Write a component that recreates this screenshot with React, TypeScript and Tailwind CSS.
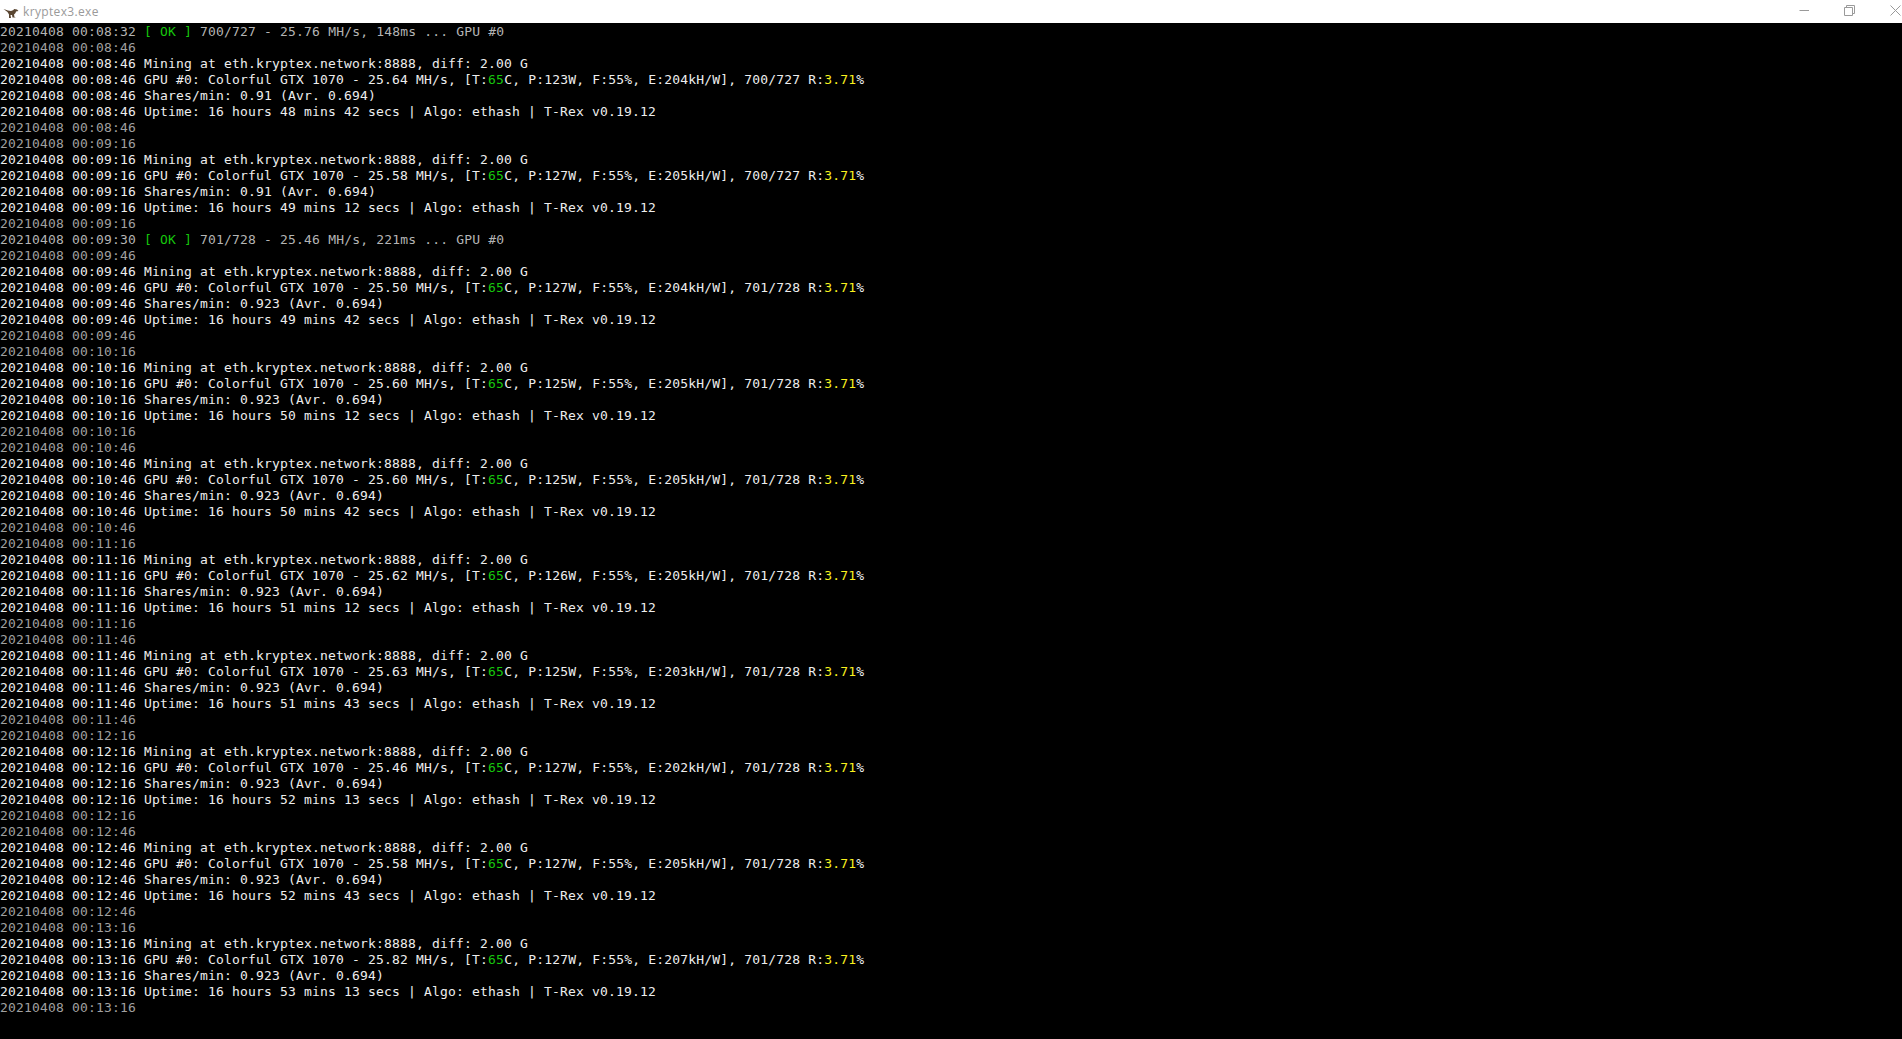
type Block = { time: string; rate: string; power: string; eff: string; shares: string; perMin: string; up: string };

const blocks: Block[] = [
  { time: "00:08:46", rate: "25.64", power: "123", eff: "204", shares: "700/727", perMin: "0.91", up: "48 mins 42" },
  { time: "00:09:16", rate: "25.58", power: "127", eff: "205", shares: "700/727", perMin: "0.91", up: "49 mins 12" },
  { time: "00:09:46", rate: "25.50", power: "127", eff: "204", shares: "701/728", perMin: "0.923", up: "49 mins 42" },
  { time: "00:10:16", rate: "25.60", power: "125", eff: "205", shares: "701/728", perMin: "0.923", up: "50 mins 12" },
  { time: "00:10:46", rate: "25.60", power: "125", eff: "205", shares: "701/728", perMin: "0.923", up: "50 mins 42" },
  { time: "00:11:16", rate: "25.62", power: "126", eff: "205", shares: "701/728", perMin: "0.923", up: "51 mins 12" },
  { time: "00:11:46", rate: "25.63", power: "125", eff: "203", shares: "701/728", perMin: "0.923", up: "51 mins 43" },
  { time: "00:12:16", rate: "25.46", power: "127", eff: "202", shares: "701/728", perMin: "0.923", up: "52 mins 13" },
  { time: "00:12:46", rate: "25.58", power: "127", eff: "205", shares: "701/728", perMin: "0.923", up: "52 mins 43" },
  { time: "00:13:16", rate: "25.82", power: "127", eff: "207", shares: "701/728", perMin: "0.923", up: "53 mins 13" },
];

function Stamp({ time }: { time: string }) {
  return <>20210408 {time} </>;
}

function Idle({ time }: { time: string }) {
  return (
    <div className="h-4 text-[#a0a0a0]">
      <Stamp time={time} />
    </div>
  );
}

function OkLine({ time, shares, rate, ms }: { time: string; shares: string; rate: string; ms: string }) {
  return (
    <div className="h-4 text-[#b4b4b4]">
      <Stamp time={time} />
      <span className="text-[#16c60c]">[ OK ]</span> {shares} - {rate} MH/s, {ms} ... GPU #0
    </div>
  );
}

function Stats({ b }: { b: Block }) {
  return (
    <div className="text-[#eeeeee]">
      <div className="h-4">
        <Stamp time={b.time} />
        Mining at eth.kryptex.network:8888, diff: 2.00 G
      </div>
      <div className="h-4">
        <Stamp time={b.time} />
        GPU #0: Colorful GTX 1070 - {b.rate} MH/s, [T:<span className="text-[#16c60c]">65</span>C, P:{b.power}W, F:55%, E:{b.eff}kH/W], {b.shares} R:
        <span className="text-[#f9f11e]">3.71</span>%
      </div>
      <div className="h-4">
        <Stamp time={b.time} />
        Shares/min: {b.perMin} (Avr. 0.694)
      </div>
      <div className="h-4">
        <Stamp time={b.time} />
        Uptime: 16 hours {b.up} secs | Algo: ethash | T-Rex v0.19.12
      </div>
    </div>
  );
}

export default function App() {
  return (
    <div className="flex h-[1039px] w-[1902px] flex-col overflow-hidden bg-black">
      {/* Title bar */}
      <div className="flex h-[23px] shrink-0 items-center bg-white pl-[3px] font-['Open_Sans','Noto_Sans',sans-serif] text-[12px] tracking-[0.35px] text-[#9a9a9a]">
        <svg width="16" height="16" viewBox="0 0 16 16" className="mr-[4px]">
          <path d="M0.5 5 L5 6.5 L8 7 L10.5 6 L11 5 L14 5.5 L15.5 7 L13 7.5 L12.5 9 L11 10.5 L11.5 13 L13 13.5 L9.5 13.5 L9 11 L7.5 11 L8 14 L6 14 L6 10.5 L4.5 8 Z" fill="#5a4632" />
        </svg>
        <span>kryptex3.exe</span>
        <div className="mb-[3px] ml-auto flex items-center">
          <svg width="11" height="11" viewBox="0 0 11 11" className="mr-[34px]">
            <path d="M0.5 5.5 H10" stroke="#9a9a9a" />
          </svg>
          <svg width="11" height="11" viewBox="0 0 11 11" className="mr-[35px]">
            <path d="M0.5 2.5 H8.5 V10.5 H0.5 Z M2.5 2.5 V0.5 H10.5 V8.5 H8.5" fill="none" stroke="#9a9a9a" />
          </svg>
          <svg width="11" height="11" viewBox="0 0 11 11" className="mr-px">
            <path d="M0.5 0.5 L10.5 10.5 M10.5 0.5 L0.5 10.5" stroke="#9a9a9a" />
          </svg>
        </div>
      </div>

      {/* Console */}
      <div className="flex-1 whitespace-pre pt-px font-['DejaVu_Sans_Mono',monospace] text-[13px] leading-4 tracking-[0.174px]">
        <OkLine time="00:08:32" shares="700/727" rate="25.76" ms="148ms" />
        <Idle time="00:08:46" />
        {blocks.map((b, i) => (
          <div key={b.time}>
            <Stats b={b} />
            <Idle time={b.time} />
            {i === 1 && <OkLine time="00:09:30" shares="701/728" rate="25.46" ms="221ms" />}
            {i < blocks.length - 1 && <Idle time={blocks[i + 1].time} />}
          </div>
        ))}
      </div>
    </div>
  );
}
